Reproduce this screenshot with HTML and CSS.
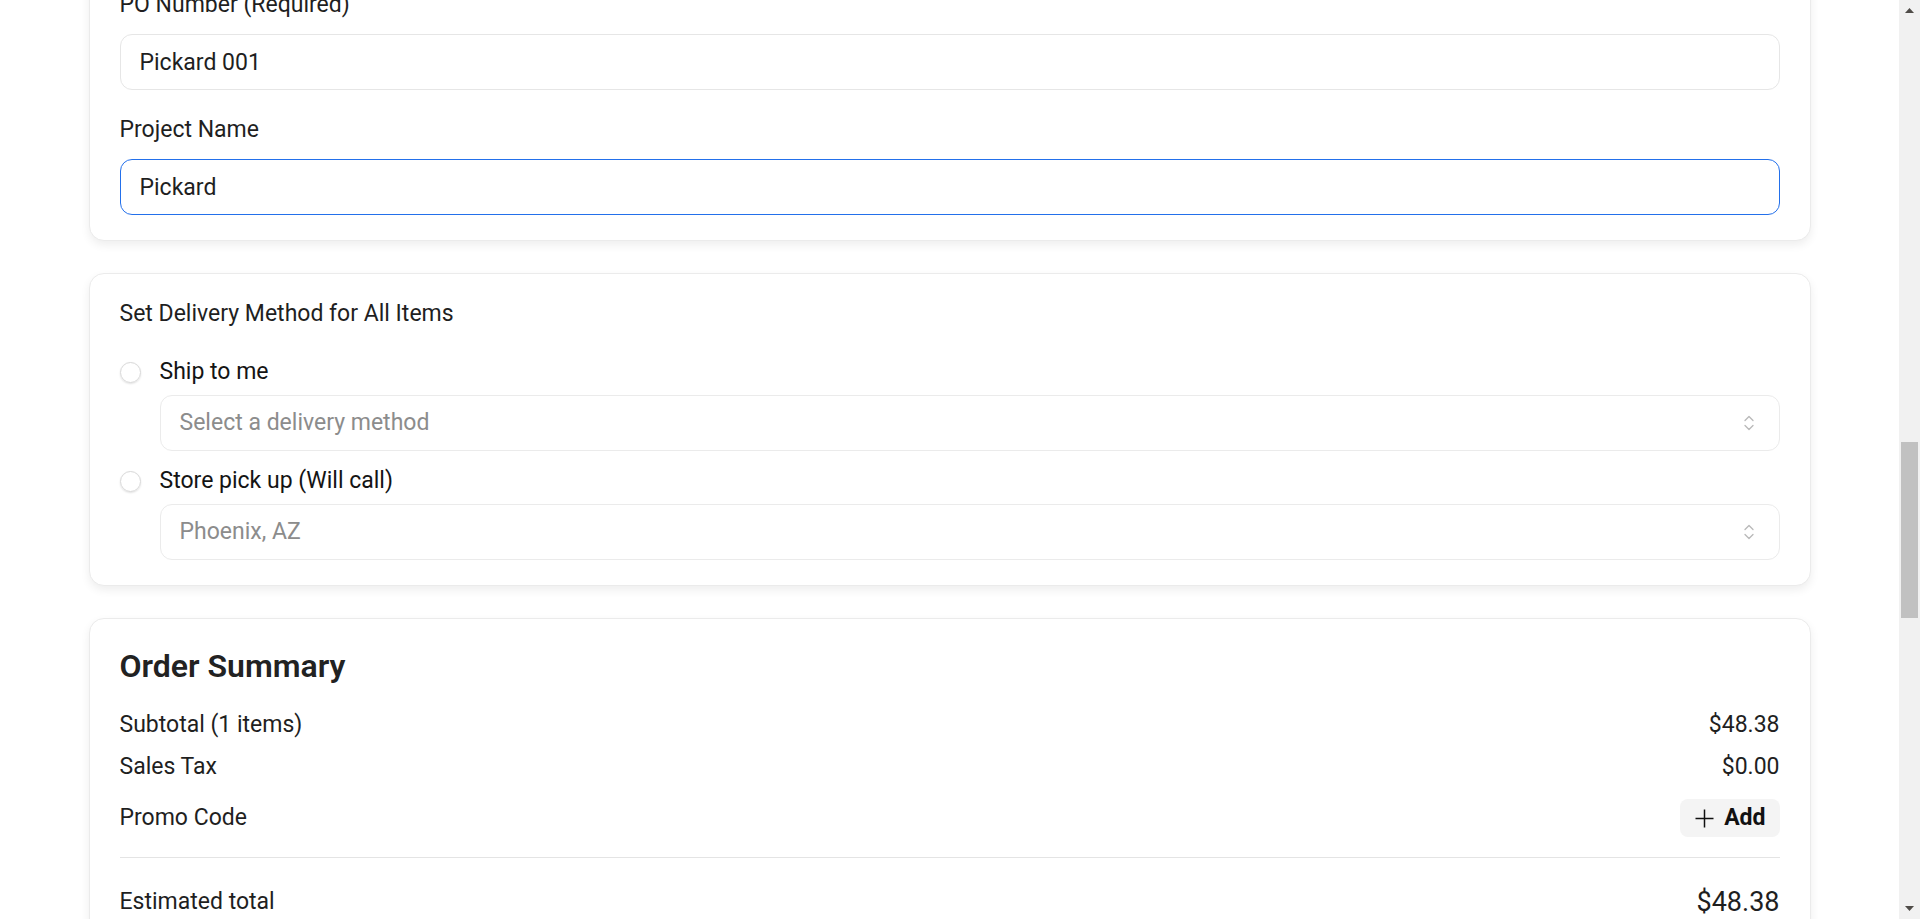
FILE: index.html
```html
<!DOCTYPE html>
<html lang="en">
<head>
<meta charset="utf-8">
<title>Checkout</title>
<link rel="stylesheet" href="styles.css">
</head>
<body>
<div class="window">
  <main class="page">
    <div class="stack">
      <section class="card">
        <div class="field">
          <label class="label" for="po">PO Number (Required)</label>
          <input class="input" id="po" type="text" value="Pickard 001">
        </div>
        <div class="field">
          <label class="label" for="project">Project Name</label>
          <input class="input focused" id="project" type="text" value="Pickard">
        </div>
      </section>

      <section class="card">
        <div class="delivery-title">Set Delivery Method for All Items</div>
        <div class="group">
          <div class="option"><span class="radio"></span><span class="option-text">Ship to me</span></div>
          <div class="select">
            <span>Select a delivery method</span>
            <svg class="chev" width="10" height="16" viewBox="0 0 10 16"><path d="M1 5.5 L5 1.5 L9 5.5 M1 10.5 L5 14.5 L9 10.5" fill="none" stroke="#b8b8b8" stroke-width="1.3" stroke-linecap="round" stroke-linejoin="round"/></svg>
          </div>
        </div>
        <div class="group">
          <div class="option"><span class="radio"></span><span class="option-text">Store pick up (Will call)</span></div>
          <div class="select">
            <span>Phoenix, AZ</span>
            <svg class="chev" width="10" height="16" viewBox="0 0 10 16"><path d="M1 5.5 L5 1.5 L9 5.5 M1 10.5 L5 14.5 L9 10.5" fill="none" stroke="#b8b8b8" stroke-width="1.3" stroke-linecap="round" stroke-linejoin="round"/></svg>
          </div>
        </div>
      </section>

      <section class="card">
        <h2 class="summary-title">Order Summary</h2>
        <div class="row"><span>Subtotal (1 items)</span><span>$48.38</span></div>
        <div class="row"><span>Sales Tax</span><span>$0.00</span></div>
        <div class="row promo"><span>Promo Code</span>
          <button class="add-btn" type="button">
            <svg width="19" height="19" viewBox="0 0 19 19"><path d="M9.5 0.5 V18.5 M0.5 9.5 H18.5" stroke="#111" stroke-width="1.5" fill="none"/></svg>
            <span>Add</span>
          </button>
        </div>
        <div class="divider"></div>
        <div class="row total-row"><span>Estimated total</span><span class="total-value">$48.38</span></div>
      </section>
    </div>
  </main>
  <div class="scrollbar">
    <div class="sb-btn"><svg width="9" height="5" viewBox="0 0 9 5"><path d="M0 5 L4.5 0 L9 5 Z" fill="#4f4c48"/></svg></div>
    <div class="sb-track"><div class="sb-thumb"></div></div>
    <div class="sb-btn"><svg width="9" height="5" viewBox="0 0 9 5"><path d="M0 0 L4.5 5 L9 0 Z" fill="#4f4c48"/></svg></div>
  </div>
</div>
</body>
</html>
```
FILE: styles.css
```css
* { box-sizing: border-box; }
html, body { margin: 0; height: 100%; }
body {
  overflow: hidden;
  background: #ffffff;
  font-family: Roboto, "Liberation Sans", Arial, sans-serif;
  font-size: 23px;
  line-height: 30px;
  color: #1f1f1f;
}
.window { display: flex; height: 919px; }
.page { flex: 1; overflow: hidden; }
.stack {
  width: 1722px;
  margin: -36px auto 0;
  display: flex;
  flex-direction: column;
  gap: 32px;
}
.card {
  background: #fff;
  border: 1px solid #ebebeb;
  border-radius: 15px;
  box-shadow: 0 4px 10px rgba(0, 0, 0, 0.07);
  padding: 25px 30px;
}
.field + .field { margin-top: 25px; }
.label { display: block; margin-bottom: 14px; }
.input {
  display: block;
  width: 100%;
  height: 56px;
  border: 1px solid #e6e6e6;
  border-radius: 12px;
  padding: 0 19px;
  font: inherit;
  color: inherit;
  background: #fff;
  outline: none;
}
.input.focused { border-color: #2370eb; }

.delivery-title { margin-bottom: 28px; }
.option { display: flex; align-items: center; gap: 19px; height: 30px; }
.radio {
  width: 21px;
  height: 21px;
  border-radius: 50%;
  border: 1px solid #d8d8d8;
  box-shadow: 0 1px 2px rgba(0, 0, 0, 0.12);
  flex: none;
}
.option-text { font-weight: 400; color: #141414; }
.select {
  margin: 8px 0 0 40px;
  height: 56px;
  border: 1px solid #ebebeb;
  border-radius: 12px;
  display: flex;
  align-items: center;
  justify-content: space-between;
  padding: 0 25px 0 19px;
  color: #8c8c8c;
}
.group + .group { margin-top: 15px; }

.summary-title {
  margin: 0 0 22px;
  font-size: 32px;
  line-height: 44px;
  font-weight: 600;
  color: #222;
}
.row { display: flex; justify-content: space-between; align-items: center; }
.row + .row { margin-top: 12px; }
.row.promo { margin-top: 17px; }
.add-btn {
  height: 38px;
  display: flex;
  align-items: center;
  gap: 10px;
  padding: 0 14px 0 15px;
  border: none;
  border-radius: 8px;
  background: #f4f4f4;
  font: inherit;
  font-weight: 700;
  color: #111;
}
.divider { border-top: 1px solid #e4e4e4; margin: 20px 0 27px; }
.row.total-row { margin-top: 0; }
.total-value { font-size: 27px; line-height: 34px; }

.scrollbar {
  width: 21px;
  background: #f1f1f1;
  display: flex;
  flex-direction: column;
}
.sb-btn { height: 21px; display: flex; align-items: center; justify-content: center; }
.sb-track { flex: 1; padding: 0 2px; }
.sb-thumb { margin-top: 421px; height: 176px; background: #c1c1c1; }
```
